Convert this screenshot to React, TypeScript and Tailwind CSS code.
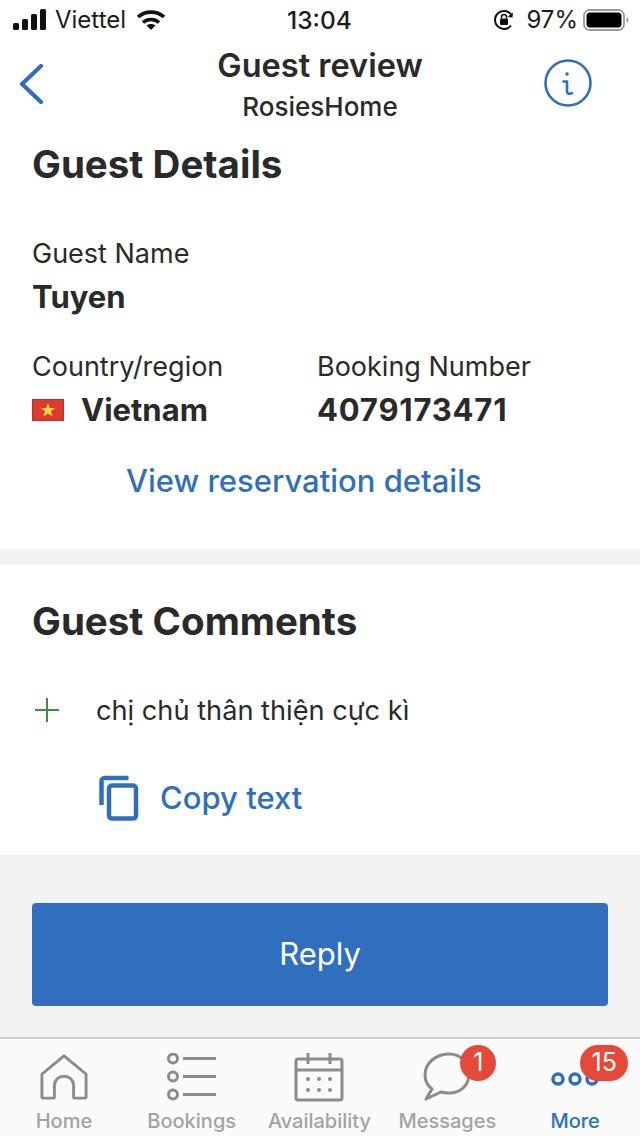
import type { ReactNode } from 'react';

const TABS: { label: string; icon: ReactNode; badge?: string; active?: boolean }[] = [
  { label: 'Home', icon: <HomeIcon /> },
  { label: 'Bookings', icon: <ListIcon /> },
  { label: 'Availability', icon: <CalendarIcon /> },
  { label: 'Messages', icon: <ChatIcon />, badge: '1' },
  { label: 'More', icon: <MoreIcon />, badge: '15', active: true },
];

export default function App() {
  return (
    <div className="flex h-[1136px] w-[640px] flex-col overflow-hidden bg-white font-['Inter',sans-serif] text-[#2a2a2a]">
      <StatusBar />

      <header className="grid h-[100px] grid-cols-[1fr_auto_1fr] items-start px-[48px]">
        <svg className="mt-[24px] -ml-[30px]" width="26" height="40" viewBox="0 0 26 40" fill="none">
          <path d="M23 3 4 21l19 18" stroke="#2f6fbd" strokeWidth="4.200" strokeLinecap="round" strokeLinejoin="round" transform="translate(0 -1)" />
        </svg>
        <div className="flex flex-col items-center">
          <h1 className="mt-[5px] text-[32.500px] leading-[42px] font-semibold whitespace-nowrap">Guest review</h1>
          <p className="mt-[2px] text-[26px] leading-[36px] font-medium">RosiesHome</p>
        </div>
        <svg className="mt-[19px] justify-self-end" width="48" height="48" viewBox="0 0 48 48" fill="none">
          <circle cx="24" cy="24" r="22.500" stroke="#2f6fbd" strokeWidth="2.600" />
          <circle cx="23" cy="15" r="1.800" fill="#2f6fbd" />
          <path d="M19.500 22.500h3.500v10c0 2 1.800 2.800 5 1.800" stroke="#2f6fbd" strokeWidth="2.600" strokeLinecap="round" strokeLinejoin="round" />
        </svg>
      </header>

      <section className="box-content h-[409px] border-b-[16px] border-[#f2f2f2] px-[33px]">
        <h2 className="-ml-[1px] text-[38.500px] leading-[48px] font-bold">Guest Details</h2>
        <p className="mt-[49px] -ml-[1px] text-[27px] leading-[34px]">Guest Name</p>
        <p className="mt-[8px] -ml-[1px] text-[31px] leading-[36px] font-bold">Tuyen</p>

        <div className="mt-[35px] -ml-[1px] flex">
          <div className="w-[285px]">
            <p className="text-[27px] leading-[34px]">Country/region</p>
            <div className="mt-[8px] flex items-center">
              <VietnamFlag />
              <span className="ml-[17px] text-[31px] leading-[36px] font-bold">Vietnam</span>
            </div>
          </div>
          <div>
            <p className="text-[27px] leading-[34px]">Booking Number</p>
            <p className="mt-[8px] text-[31px] leading-[36px] font-bold tracking-[0.8px]">4079173471</p>
          </div>
        </div>

        <p className="mt-[34px] pl-[93px] text-[31px] leading-[38px] font-medium text-[#2f6fbd]">View reservation details</p>
      </section>

      <section className="h-[290px] px-[33px] pt-[32px]">
        <h2 className="-ml-[1px] text-[38.500px] leading-[48px] font-bold">Guest Comments</h2>
        <div className="mt-[49px] flex items-center">
          <svg className="-mt-[2px]" width="28" height="28" viewBox="0 0 28 28" fill="none">
            <path d="M14 2v24M2 14h24" stroke="#3f8f3f" strokeWidth="2" />
          </svg>
          <p className="ml-[35px] text-[27.200px] leading-[34px]">chị chủ thân thiện cực kì</p>
        </div>
        <div className="mt-[47px] ml-[66px] flex items-center">
          <svg width="40" height="46" viewBox="0 0 40 46" fill="none">
            <path d="M2.500 30V6a3 3 0 0 1 3-3h24" stroke="#2f6fbd" strokeWidth="4.500" />
            <rect x="10" y="10.500" width="27" height="33" rx="3" stroke="#2f6fbd" strokeWidth="4.500" />
          </svg>
          <span className="ml-[21px] text-[31px] leading-[40px] font-medium text-[#2f6fbd]">Copy text</span>
        </div>
      </section>

      <div className="flex-1 bg-[#f2f2f2] px-[32px] pt-[48px]">
        <button className="h-[103px] w-full rounded-[4px] bg-[#2f6fbd] text-[31px] text-white">Reply</button>
      </div>

      <nav className="grid h-[99px] grid-cols-5 border-t-2 border-[#cfcfcf] bg-[#fafafa] pr-[1px]">
        {TABS.map((tab) => (
          <div key={tab.label} className="relative flex flex-col items-center pt-[12px]">
            <div className="flex h-[52px] items-center justify-center">{tab.icon}</div>
            <span className={`mt-[6px] text-[20px] leading-[24px] font-medium whitespace-nowrap ${tab.active ? 'text-[#2f6fbd]' : 'text-[#a3a3a3]'}`}>
              {tab.label}
            </span>
            {tab.badge ? (
              <span
                className={`absolute top-[6px] flex h-[36px] items-center justify-center rounded-full bg-[#e5493a] text-[25px] text-white ${tab.active ? 'left-[69px] w-[48px]' : 'left-[77px] w-[36px]'}`}
              >
                {tab.badge}
              </span>
            ) : null}
          </div>
        ))}
      </nav>
    </div>
  );
}

function StatusBar() {
  return (
    <div className="relative flex h-[40px] items-center justify-between pr-[11px] pl-[13px] text-[25px] text-[#1c1c1c]">
      <div className="flex items-center">
        <svg width="34" height="22" viewBox="0 0 34 22" fill="#111">
          <rect x="0" y="14" width="6" height="7" rx="1.500" />
          <rect x="9" y="10" width="6" height="11" rx="1.500" />
          <rect x="18" y="5" width="6" height="16" rx="1.500" />
          <rect x="27" y="0" width="6" height="21" rx="1.500" />
        </svg>
        <span className="ml-[8px] text-[24px] leading-none">Viettel</span>
        <svg className="ml-[10px]" width="30" height="22" viewBox="0 0 30 22" fill="none" stroke="#111" strokeWidth="3.600">
          <path d="M2 8c7.500-6.500 18.500-6.500 26 0" />
          <path d="M7 13.500c4.500-4 11.500-4 16 0" />
          <path d="M15 21l-4.500-4.500c2.500-2 6.500-2 9 0z" fill="#111" stroke="none" />
        </svg>
      </div>
      <span className="absolute left-[287px] text-[24.500px] leading-none font-medium">13:04</span>
      <div className="flex items-center">
        <svg width="22" height="22" viewBox="0 0 22 22" fill="none">
          <path d="M18 16.500A9 9 0 1 1 18.500 6" stroke="#111" strokeWidth="2" />
          <path d="m15.500 7 5 .5 .5-5z" fill="#111" transform="translate(-1 1)" />
          <rect x="7" y="9.500" width="8" height="6.500" rx="1" fill="#111" />
          <path d="M8.500 9.500V8a2.500 2.500 0 0 1 5 0v1.500" stroke="#111" strokeWidth="1.500" />
        </svg>
        <span className="ml-[11px] text-[24px] leading-none">97%</span>
        <svg className="ml-[5px]" width="46" height="24" viewBox="0 0 46 24" fill="none">
          <rect x="1" y="2" width="40" height="20" rx="5.500" stroke="#9a9a9a" strokeWidth="1.800" />
          <rect x="3.500" y="4.500" width="35" height="15" rx="3.500" fill="#000" />
          <path d="M43.500 9v6c1.200-.4 2-1.600 2-3s-.8-2.600-2-3z" fill="#9a9a9a" />
        </svg>
      </div>
    </div>
  );
}

function VietnamFlag() {
  return (
    <svg width="32" height="22" viewBox="0 0 32 22">
      <rect width="32" height="22" fill="#dc3a30" />
      <rect x="0.500" y="0.500" width="31" height="21" fill="none" stroke="#b8322b" />
      <path d="m16 4 1.900 5 5.400.1-4.300 3.200 1.600 5.200-4.600-3.100-4.600 3.100 1.600-5.200-4.300-3.200 5.400-.1z" fill="#f7d83c" />
    </svg>
  );
}

function HomeIcon() {
  return (
    <svg width="48" height="48" viewBox="0 0 50 48" fill="none" stroke="#8c8c8c" strokeWidth="3" strokeLinejoin="round">
      <path d="M25 2 2 21v24a1 1 0 0 0 1 1h11a1 1 0 0 0 1-1V33c0-13 20-13 20 0v12a1 1 0 0 0 1 1h11a1 1 0 0 0 1-1V21z" />
    </svg>
  );
}

function ListIcon() {
  return (
    <svg width="50" height="48" viewBox="0 0 50 48" fill="none" stroke="#8c8c8c" strokeWidth="3">
      <circle cx="6" cy="5.500" r="4.500" />
      <circle cx="6" cy="23.500" r="4.500" />
      <circle cx="6" cy="41.500" r="4.500" />
      <path d="M16 5.500h33M16 23.500h33M16 41.500h33" />
    </svg>
  );
}

function CalendarIcon() {
  return (
    <svg width="50" height="50" viewBox="0 0 50 50" fill="none" stroke="#8c8c8c" strokeWidth="3">
      <rect x="2" y="7" width="46" height="41" rx="2" />
      <path d="M2 18h46M14 1v11M36 1v11" />
      <g fill="#8c8c8c" stroke="none">
        <circle cx="14" cy="27" r="2" />
        <circle cx="25" cy="27" r="2" />
        <circle cx="36" cy="27" r="2" />
        <circle cx="14" cy="38" r="2" />
        <circle cx="25" cy="38" r="2" />
        <circle cx="36" cy="38" r="2" />
      </g>
    </svg>
  );
}

function ChatIcon() {
  return (
    <svg width="48" height="50" viewBox="0 0 48 50" fill="none" stroke="#8c8c8c" strokeWidth="3" strokeLinejoin="round">
      <path d="M26 2C13 2 2 11 2 23c0 6 3 11 7 14L3 47l15-7c3 1 5 1 8 1 12 0 20-8 20-19S38 2 26 2z" />
    </svg>
  );
}

function MoreIcon() {
  return (
    <svg width="48" height="16" viewBox="0 0 48 16" fill="none" stroke="#2f6fbd" strokeWidth="3.500" className="mt-[4px]">
      <circle cx="7" cy="8" r="5" />
      <circle cx="24" cy="8" r="5" />
      <circle cx="41" cy="8" r="5" />
    </svg>
  );
}
